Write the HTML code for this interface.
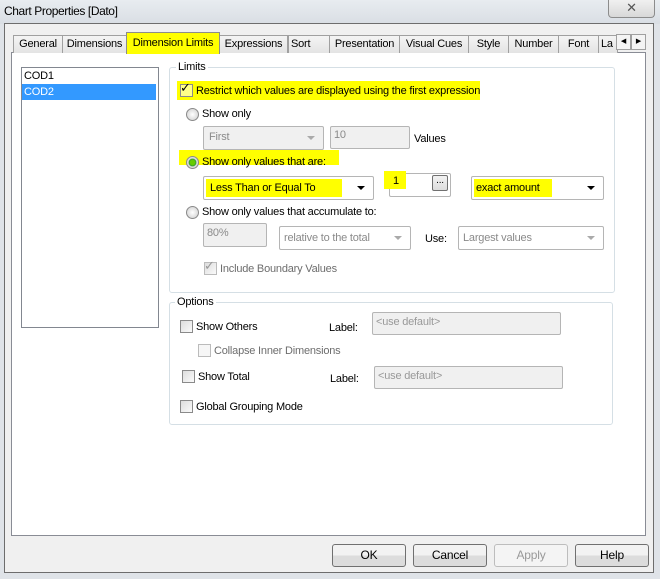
<!DOCTYPE html><html><head><style>
body{margin:0;width:660px;height:579px;background:#dfe3e8;font-family:"Liberation Sans",sans-serif;font-size:11px;letter-spacing:-0.2px;color:#000;position:relative;overflow:hidden}
.a{position:absolute;white-space:nowrap}
.hl{background:#ffff00}
.tab{position:absolute;top:35px;height:17px;border:1px solid #a0a0a0;border-bottom:none;background:linear-gradient(#f4f4f4,#e4e4e4);font-size:11px;line-height:17px;text-align:center}
.cb{position:absolute;width:11px;height:11px;border:1px solid #8a8a8a;background:linear-gradient(135deg,#ddd,#fafafa)}
.rd{position:absolute;width:11px;height:11px;border:1px solid #8a8a8a;border-radius:50%;background:radial-gradient(#fff,#ccc)}
.box{position:absolute;border:1px solid #b5b5b5;background:#fff;border-radius:2px}
.dis{background:#f0f0f0;color:#8a8a8a}
.arr{position:absolute;right:8px;top:9px;width:0;height:0;border-left:4px solid transparent;border-right:4px solid transparent;border-top:4px solid #000}
.arr.g{border-top-color:#aaa}
.btn{position:absolute;top:544px;height:21px;border:1px solid #707070;border-radius:3px;background:linear-gradient(#f2f2f2 50%,#dcdcdc 50%);text-align:center;line-height:21px;font-size:12px}
</style></head><body>
<div class="a" style="left:0;top:0;width:660px;height:24px;background:linear-gradient(#e8ecf0,#d9dee4)"></div>
<div class="a" style="left:4px;top:4px;font-size:12px;letter-spacing:-0.4px">Chart Properties [Dato]</div>
<div class="a" style="left:608px;top:0;width:45px;height:17px;border:1px solid #8c8c8c;border-top:none;border-radius:0 0 4px 4px;background:linear-gradient(#f0f0f0,#d8d8d8);text-align:center;font-size:13px;line-height:16px;color:#555">✕</div>
<div class="a" style="left:4px;top:23px;width:648px;height:548px;background:#f0f0f0;border:1px solid #6d6d6d"></div>
<div class="a" style="left:11px;top:52px;width:633px;height:482px;background:#fff;border:1px solid #898c95"></div>
<div class="tab" style="left:13px;width:48px">General</div>
<div class="tab" style="left:62px;width:63px">Dimensions</div>
<div class="tab" style="left:288px;text-align:left;padding-left:2px;width:38px">Sort</div>
<div class="tab" style="left:219px;width:67px">Expressions</div>
<div class="tab" style="left:329px;width:69px">Presentation</div>
<div class="tab" style="left:399px;width:68px">Visual Cues</div>
<div class="tab" style="left:468px;width:39px">Style</div>
<div class="tab" style="left:508px;width:49px">Number</div>
<div class="tab" style="left:558px;width:39px">Font</div>
<div class="tab" style="left:598px;text-align:left;padding-left:2px;width:16px;overflow:hidden">La</div>
<div class="a" style="left:616px;top:34px;width:13px;height:14px;border:1px solid #a0a0a0;background:#f4f4f4;font-size:7px;text-align:center;line-height:14px">◀</div>
<div class="a" style="left:631px;top:34px;width:13px;height:14px;border:1px solid #a0a0a0;background:#f4f4f4;font-size:7px;text-align:center;line-height:14px">▶</div>
<div class="a" style="left:126px;top:32px;width:92px;height:21px;border:1px solid #8c8c8c;border-bottom:none;background:#ffff00;text-align:center;line-height:20px">Dimension Limits</div>

<div class="a" style="left:21px;top:67px;width:136px;height:259px;border:1px solid #828790;background:#fff"></div>
<div class="a" style="left:24px;top:70px">COD1</div>
<div class="a" style="left:22px;top:84px;width:134px;height:16px;background:#3399ff;color:#fff;line-height:16px;padding-left:2px;box-sizing:border-box">COD2</div>

<div class="a" style="left:169px;top:67px;width:444px;height:224px;border:1px solid #d5dfe5;border-radius:3px"></div>
<div class="a" style="left:176px;top:61px;background:#fff;padding:0 2px">Limits</div>
<div class="a hl" style="left:177px;top:81px;width:303px;height:19px"></div>
<div class="cb" style="left:180px;top:84px;background:#ffff88"></div><div class="a" style="left:180px;top:80px;font-size:13px">✓</div>
<div class="a" style="left:196px;top:85px">Restrict which values are displayed using the first expression</div>
<div class="rd" style="left:186px;top:108px"></div><div class="a" style="left:202px;top:108px">Show only</div>
<div class="box dis" style="left:203px;top:126px;width:119px;height:22px"><span class="a" style="left:5px;top:4px">First</span><div class="arr g"></div></div>
<div class="box dis" style="left:330px;top:126px;width:78px;height:21px"><span class="a" style="left:3px;top:2px">10</span></div>
<div class="a" style="left:414px;top:133px">Values</div>
<div class="a hl" style="left:179px;top:150px;width:160px;height:15px"></div>
<div class="rd" style="left:186px;top:156px;background:radial-gradient(#6c0 30%,#393 45%,#ddd 55%)"></div><div class="a" style="left:202px;top:156px">Show only values that are:</div>
<div class="box" style="left:203px;top:176px;width:169px;height:22px"><span class="a hl" style="left:2px;top:2px;padding:3px 4px;width:128px">Less Than or Equal To</span><div class="arr"></div></div>
<div class="box" style="left:389px;top:173px;width:60px;height:22px"></div>
<div class="a hl" style="left:384px;top:171px;width:22px;height:18px"></div>
<div class="a" style="left:393px;top:175px">1</div>
<div class="a" style="left:432px;top:175px;width:14px;height:14px;border:1px solid #707070;border-radius:2px;background:linear-gradient(#f2f2f2,#ddd);font-size:10px;text-align:center;line-height:10px">...</div>
<div class="box" style="left:471px;top:176px;width:131px;height:22px"><span class="a hl" style="left:2px;top:2px;padding:3px 4px 3px 2px;width:72px">exact amount</span><div class="arr"></div></div>
<div class="rd" style="left:186px;top:206px"></div><div class="a" style="left:202px;top:206px">Show only values that accumulate to:</div>
<div class="box dis" style="left:203px;top:223px;width:62px;height:22px"><span class="a" style="left:3px;top:3px">80%</span></div>
<div class="box dis" style="left:279px;top:226px;width:130px;height:22px;background:#fff"><span class="a" style="left:4px;top:5px">relative to the total</span><div class="arr g"></div></div>
<div class="a" style="left:425px;top:233px">Use:</div>
<div class="box dis" style="left:458px;top:226px;width:144px;height:22px;background:#fff"><span class="a" style="left:4px;top:5px">Largest values</span><div class="arr g"></div></div>
<div class="cb" style="left:204px;top:262px;border-color:#bbb"></div><div class="a" style="left:204px;top:258px;color:#999;font-size:13px">✓</div>
<div class="a" style="left:220px;top:263px;color:#6d6d6d">Include Boundary Values</div>

<div class="a" style="left:169px;top:302px;width:442px;height:121px;border:1px solid #d5dfe5;border-radius:3px"></div>
<div class="a" style="left:175px;top:296px;background:#fff;padding:0 2px">Options</div>
<div class="cb" style="left:180px;top:320px"></div><div class="a" style="left:196px;top:321px">Show Others</div>
<div class="a" style="left:329px;top:322px">Label:</div>
<div class="box dis" style="left:372px;top:312px;width:187px;height:21px;color:#999"><span class="a" style="left:3px;top:3px">&lt;use default&gt;</span></div>
<div class="cb" style="left:198px;top:344px;border-color:#bbb;background:#f6f6f6"></div><div class="a" style="left:214px;top:345px;color:#6d6d6d">Collapse Inner Dimensions</div>
<div class="cb" style="left:182px;top:370px"></div><div class="a" style="left:198px;top:371px">Show Total</div>
<div class="a" style="left:330px;top:373px">Label:</div>
<div class="box dis" style="left:374px;top:366px;width:187px;height:21px;color:#999"><span class="a" style="left:3px;top:3px">&lt;use default&gt;</span></div>
<div class="cb" style="left:180px;top:400px"></div><div class="a" style="left:196px;top:401px">Global Grouping Mode</div>

<div class="btn" style="left:332px;width:72px">OK</div>
<div class="btn" style="left:413px;width:72px">Cancel</div>
<div class="btn" style="left:494px;width:72px;border-color:#bdbdbd;color:#999;background:#f4f4f4">Apply</div>
<div class="btn" style="left:575px;width:72px">Help</div>
</body></html>
